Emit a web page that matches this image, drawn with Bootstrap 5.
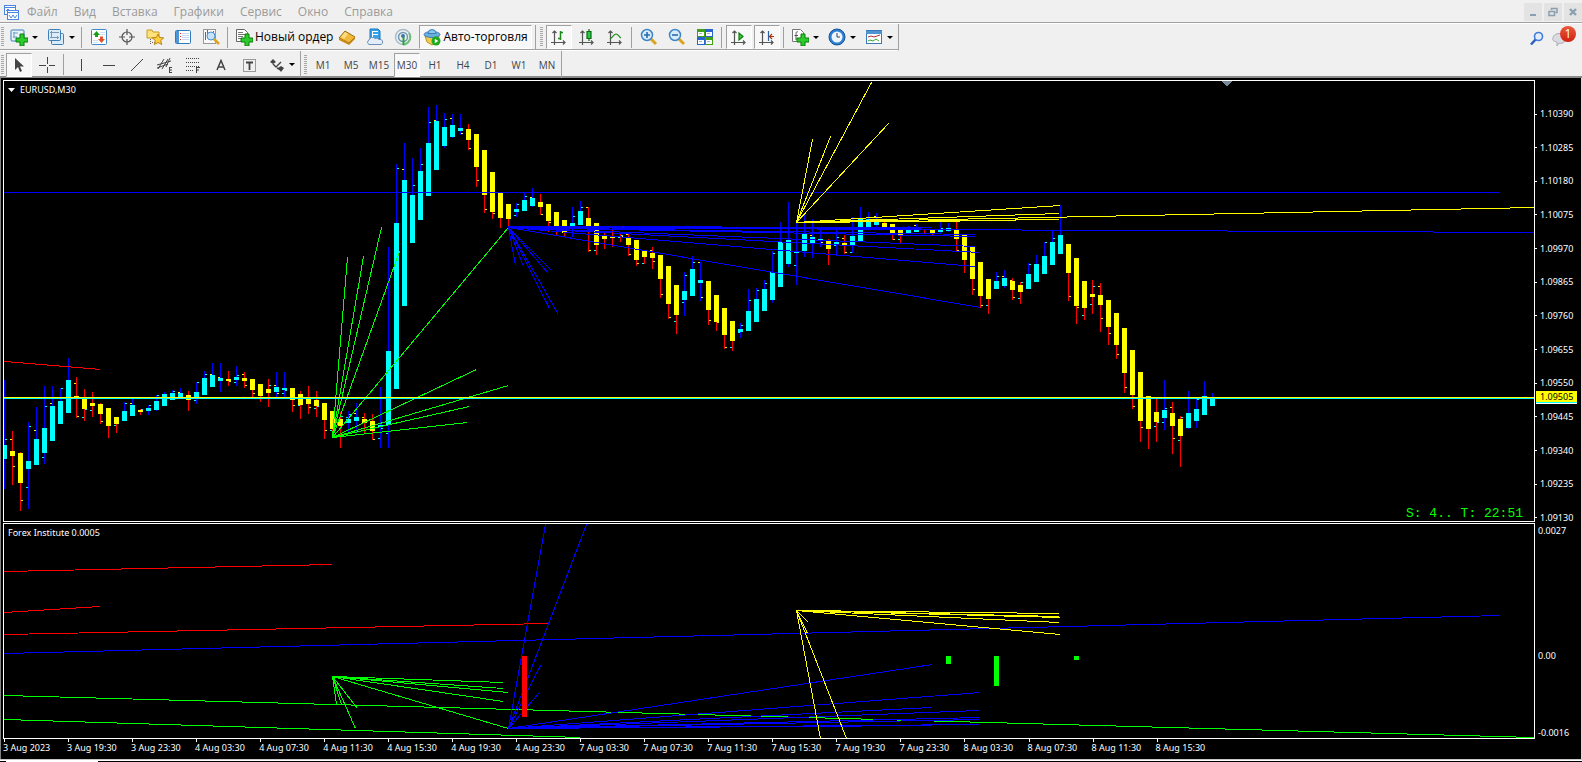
<!DOCTYPE html>
<html lang="ru">
<head>
<meta charset="utf-8">
<meta name="viewport" content="width=device-width, initial-scale=1">
<title>EURUSD,M30</title>
<link rel="stylesheet" href="https://cdn.jsdelivr.net/npm/bootstrap@5.3.0/dist/css/bootstrap.min.css">
<style>
body { background: #f0f0f0; font-family: "Open Sans", "Noto Sans", sans-serif; font-size: 12px; line-height: 16px; color: #000; }
button { border: 0; background: none; padding: 0; color: inherit; font: inherit; }
.menubar { height: 24px; border-bottom: 1px solid #fff; box-shadow: inset 0 -1px #a0a0a0; color: #9a9a9a; padding-top: 1px; }
.menubar nav { gap: 16px; padding-left: 8px; }
.win-btns { gap: 2px; }
.win-btn { width: 18px; height: 18px; background: #e3e3e3; display: grid; place-items: center; }
.tools-row { height: 27px; }
.strip { height: 27px; border-right: 1px solid #a0a0a0; border-bottom: 1px solid #fff; box-shadow: inset 0 -1px #a0a0a0; }
.strip-last { box-shadow: none; border-bottom: 0; }
.deck { border-bottom: 2px solid #8a8a8a; height: 27px; }
.grip { width: 3px; height: 20px; margin: 0 1px; background: repeating-linear-gradient(#a8a8a8 0 1px, #f0f0f0 1px 2px); }
.grip-frames { margin: 0 2px 0 3px; }
.tool { width: 28px; height: 24px; display: flex; align-items: center; justify-content: center; flex: none; }
.tool.drop { width: 37px; gap: 4px; }
.tool.drop::after { content: ""; border: 3px solid transparent; border-top-color: #000; border-bottom: 0; }
.tool.wide { width: auto; gap: 2px; padding: 0 0 0 4px; }
.tool.auto { margin: 0 3px 0 2px; padding: 0 3px; }
.pressed { background: #f8f8f8; border: 1px solid #fff; border-top-color: #a0a0a0; border-left-color: #a0a0a0; }
.tool.pressed:not(.wide) { width: 26px; margin: 0 1px; }
.divider { width: 1px; height: 21px; background: #a0a0a0; margin: 0 3px 0 2px; flex: none; }
.divider-end { height: 25px; margin: 0 1px 0 0; }
.frames { font-size: 10px; color: #444; }
.notice { position: relative; width: 26px; height: 20px; }
.notice b { position: absolute; left: 8px; top: -2px; width: 16px; height: 16px; border-radius: 50%; background: linear-gradient(#ea5a3c, #d02010); color: #fff; font-weight: 400; line-height: 16px; text-align: center; }
.desk { background: #000; color: #fff; font-family: "Noto Sans", sans-serif; font-size: 9px; line-height: 12px; border-left: 1px solid #808080; border-right: 1px solid #d8d8d8; padding: 2px 0 0 2px; }
.pane { border: 1px solid #fff; }
.pane svg { display: block; width: 100%; height: 100%; }
.pane-price { flex: 442 1 0; min-height: 0; }
.pane-ind { flex: 216 1 0; min-height: 0; margin-top: 1px; }
.price-col, .ind-col { width: 46px; flex: none; }
.plot { position: absolute; inset: 0; }
.cap { position: absolute; left: 4px; top: 3px; }
.cap .caret { display: inline-block; width: 7px; height: 4px; margin-right: 5px; vertical-align: 1px; }
.clock { position: absolute; right: 11px; bottom: -1px; font: 13px/16px "Liberation Mono", monospace; color: #0f0; white-space: pre; }
.price-col { padding: 28px 0 0; margin-bottom: -2px; }
.tick { display: flex; align-items: center; gap: 3px; }
.tick::before { content: ""; width: 2px; height: 1px; background: #fff; }
.quote { position: absolute; left: 1px; right: 4px; top: calc(100% * 311 / 444); background: #ff0; color: #000; padding-left: 4px; line-height: 11px; border-bottom: 1px solid #fff; box-shadow: inset 0 -1px #0ff; height: 13px; }
.ind-col { padding: 2px 0 0 3px; }
.dates { height: 20px; margin-right: 46px; padding-left: 1px; }
.dates span { flex: none; width: calc(100% * 64 / 1530); white-space: nowrap; position: relative; padding-top: 3px; text-indent: -1px; }
.dates span::before { content: ""; position: absolute; left: 0; top: 0; width: 1px; height: 3px; background: #fff; }
.tail { height: 3px; background: linear-gradient(#c8c8c8 0 1px, #fff 1px 2px, #000 2px); }
.tail i { height: 1px; width: 92px; margin-left: 6px; background: #fff; align-self: end; }
</style>
<script src="https://cdn.jsdelivr.net/npm/bootstrap@5.3.0/dist/js/bootstrap.bundle.min.js"></script>
</head>
<body class="vh-100 d-flex flex-column overflow-hidden">
<header>
  <div class="menubar d-flex align-items-center">
    <svg class="ms-1" width="15" height="15" viewBox="0 0 15 15" fill="#fff" stroke="#4a86e0"><rect x=".5" y=".5" width="11" height="9"/><path d="M1 2.500h10" /><path d="M2 6l2-2 2 2" fill="none"/><rect x="3.500" y="5.500" width="11" height="9"/><path d="M4 7.500h10M5 10l2 3 2-3 2 3 2-3" fill="none"/></svg>
    <nav class="d-flex flex-grow-1">
      <button>Файл</button><button>Вид</button><button>Вставка</button><button>Графики</button><button>Сервис</button><button>Окно</button><button>Справка</button>
    </nav>
    <div class="win-btns d-flex">
      <button class="win-btn" aria-label="Свернуть"><svg width="10" height="10"><path d="M2 7h6v2H2z" fill="#8c9fb1"/></svg></button>
      <button class="win-btn" aria-label="Восстановить"><svg width="10" height="10" fill="none" stroke="#8c9fb1" stroke-width="1.500"><path d="M3.500 3V1.500h5.500v4H7.500M1 4.500h5.500v4H1z"/></svg></button>
      <button class="win-btn" aria-label="Закрыть"><svg width="10" height="10" stroke="#8c9fb1" stroke-width="2.400"><path d="M2 2l6 6M8 2L2 8"/></svg></button>
    </div>
  </div>

  <div class="tools-row d-flex justify-content-between">
    <div class="strip d-flex align-items-center">
      <span class="grip"></span>
      <button class="tool drop" aria-label="Новый график"><svg width="18" height="18" viewBox="0 0 18 18"><rect x="1" y="2" width="13" height="11" rx="1" fill="#e8f2fb" stroke="#3d80b8"/><path d="M3 5h5M4 4v6M3 9h4" stroke="#6a9cc4"/><path d="M10 6h4v4h4v4h-4v4h-4v-4H6v-4h4z" fill="#2ccb2c" stroke="#0b7d0b"/></svg></button>
      <button class="tool drop" aria-label="Профили"><svg width="18" height="18" viewBox="0 0 18 18" fill="#dcebf8" stroke="#3d80b8"><rect x="4.500" y="5.500" width="12" height="11" rx="1"/><rect x="1.500" y="1.500" width="12" height="11" rx="1"/><path d="M3 4.500h9M4.500 3v7M3 9.500h9M10.500 8v3" stroke="#7a97b0"/></svg></button>
      <span class="divider"></span>
      <button class="tool" aria-label="Обзор рынка"><svg width="16" height="16" viewBox="0 0 16 16"><rect x=".5" y=".5" width="15" height="15" rx="1" fill="#fff" stroke="#3e87c8"/><path d="M9 3.500h5M9 5.500h5M2 11.500h5M2 13.500h5" stroke="#cfe0f2"/><path d="M2 6l3.500-4L9 6H7v2H4V6z" fill="#19a019"/><path d="M7 10l3.500 4 3.500-4h-2V7.500H9V10z" fill="#e2522c"/></svg></button>
      <button class="tool" aria-label="Окно данных"><svg width="16" height="16" viewBox="0 0 16 16" fill="none" stroke="#555" stroke-width="1.200"><circle cx="8" cy="8" r="5"/><path d="M8 0v6M8 10v6M0 8h6M10 8h6"/></svg></button>
      <button class="tool" aria-label="Навигатор"><svg width="18" height="18" viewBox="0 0 18 18"><path d="M1 2h5l1 2h6v6H1z" fill="#ffe27a" stroke="#c79a22"/><path d="M4.500 11v6M6 14.500h3" stroke="#666" stroke-dasharray="1 1"/><path d="M12 6l1.700 3.500 4 .4-3 2.600 1 4-3.700-2-3.500 2 .8-4-3-2.600 4-.4z" fill="#ffcf3d" stroke="#b98313"/></svg></button>
      <button class="tool" aria-label="Терминал"><svg width="16" height="16" viewBox="0 0 16 16"><rect x=".5" y="1.500" width="15" height="13" rx="1" fill="#fff" stroke="#2f79bd"/><path d="M1 2h3v12H1z" fill="#4d97d6"/><path d="M7 4.500h7M7 6.500h7M7 8.500h7M7 10.500h7" stroke="#c9d6f0"/><path d="M5 4.500h1M5 7.500h1M5 10.500h1" stroke="#d22"/></svg></button>
      <button class="tool" aria-label="Тестер"><svg width="18" height="18" viewBox="0 0 18 18"><rect x="1.500" y="1.500" width="12" height="14" fill="#fafafa" stroke="#999"/><path d="M3.500 4v8M5.500 2v4M11.500 3v3" stroke="#666"/><circle cx="9" cy="8" r="4" fill="#c7e3f9" stroke="#4a8fc9"/><path d="M12 11l5 5" stroke="#d9a520" stroke-width="2.500"/></svg></button>
      <span class="divider"></span>
      <button class="tool wide"><svg width="18" height="18" viewBox="0 0 18 18"><path d="M1.500 1.500h8l3 3v9h-11z" fill="#fff" stroke="#666"/><path d="M3 4.500h5M3 6.500h7M3 8.500h5M3 10.500h3" stroke="#777"/><path d="M10 6h4v4h4v4h-4v4h-4v-4H6v-4h4z" fill="#2ccb2c" stroke="#0b7d0b"/></svg>Новый ордер</button>
      <button class="tool" aria-label="MetaEditor"><svg width="18" height="18" viewBox="0 0 18 18"><path d="M1 10l6-7 10 6-6 6z" fill="#f0b93a" stroke="#a06c0c"/><path d="M1 10v2l10 5 6-6v-2l-6 6z" fill="#c98a1a"/><path d="M3 9l4-5 3 2-4 5z" fill="#fbdc83"/></svg></button>
      <button class="tool" aria-label="Хостинг"><svg width="18" height="18" viewBox="0 0 18 18"><path d="M4 1h8l2 2v8H4z" fill="#35a2ea" stroke="#1a78bf"/><path d="M6.500 3v7M7 3.500h5M7 6.500h5" stroke="#fff" fill="none"/><path d="M3 16.500a2.500 2.500 0 010-4.500 3.500 3.500 0 016-1.500 3 3 0 014 1 2.600 2.600 0 012 5z" fill="#e4edf7" stroke="#6b8fb8"/></svg></button>
      <button class="tool" aria-label="Сигналы"><svg width="18" height="18" viewBox="0 0 18 18" fill="none"><circle cx="9" cy="9" r="7.500" stroke="#a9bccb" stroke-width="1.500"/><circle cx="9" cy="9" r="4.500" stroke="#6f97b5" stroke-width="1.500"/><path d="M9 16.500A7.500 7.500 0 0015 5" stroke="#6fbf7a" stroke-width="2"/><circle cx="9" cy="8" r="2" fill="#3c78a8"/><path d="M9.500 9v8" stroke="#2fa03c" stroke-width="2"/></svg></button>
      <button class="tool wide pressed auto"><svg width="18" height="18" viewBox="0 0 18 18"><path d="M2 8l2 6 5 3 6-3 1-6z" fill="#f3cd4a" stroke="#b9912a"/><ellipse cx="9" cy="6.500" rx="8" ry="3" fill="#69aee0" stroke="#3f7fb5"/><path d="M5 5.500a4 4 0 018 0z" fill="#8bc6ef" stroke="#3f7fb5"/><circle cx="13" cy="13" r="4.500" fill="#1eaa1e"/><path d="M11.800 10.800v4.400l3.500-2.200z" fill="#fff"/></svg>Авто-торговля</button>
      <span class="divider divider-end"></span>
      <span class="grip grip-frames"></span>
      <button class="tool pressed" aria-label="Бары"><svg width="16" height="16" viewBox="0 0 16 16" fill="none" stroke="#555" stroke-width="1.200"><path d="M3.500 16V2M1.500 4l2-2 2 2M0 13.500h14M12 11.500l2 2-2 2"/><path d="M9.500 2v9M9.500 3.500H12M7 9.500h2.500" stroke="#1b8a1b" stroke-width="1.500"/></svg></button>
      <button class="tool" aria-label="Свечи"><svg width="16" height="16" viewBox="0 0 16 16" fill="none" stroke="#555" stroke-width="1.200"><path d="M3.500 16V2M1.500 4l2-2 2 2M0 13.500h14M12 11.500l2 2-2 2"/><path d="M10 0v12" stroke="#0b6b0b"/><path d="M8 2.500h4v7H8z" fill="#2cc84c" stroke="#0b6b0b"/></svg></button>
      <button class="tool" aria-label="Линия"><svg width="16" height="16" viewBox="0 0 16 16" fill="none" stroke="#555" stroke-width="1.200"><path d="M3.500 16V2M1.500 4l2-2 2 2M0 13.500h14M12 11.500l2 2-2 2"/><path d="M3 10c3-2 4-5 6-5s3 3 5 4" stroke="#1b8a1b"/></svg></button>
      <span class="divider"></span>
      <button class="tool" aria-label="Приблизить"><svg width="18" height="18" viewBox="0 0 18 18"><path d="M10 10l6 6" stroke="#d9a520" stroke-width="3"/><circle cx="7" cy="7" r="5.500" fill="#d8ecfb" stroke="#3f86c6" stroke-width="1.500"/><path d="M4 7h6M7 4v6" stroke="#2a6cab" stroke-width="1.600"/></svg></button>
      <button class="tool" aria-label="Отдалить"><svg width="18" height="18" viewBox="0 0 18 18"><path d="M10 10l6 6" stroke="#d9a520" stroke-width="3"/><circle cx="7" cy="7" r="5.500" fill="#d8ecfb" stroke="#3f86c6" stroke-width="1.500"/><path d="M4 7h6" stroke="#2a6cab" stroke-width="1.600"/></svg></button>
      <button class="tool" aria-label="Окна мозаикой"><svg width="16" height="16" viewBox="0 0 16 16"><path d="M0 0h8v8H0zM8 8h8v8H8z" fill="#3fa01c"/><path d="M8 0h8v8H8zM0 8h8v8H0z" fill="#2a62cf"/><path d="M1 3h6v4H1zM9 3h6v4H9zM1 11h6v4H1zM9 11h6v4H9z" fill="#fff"/><path d="M2 4.500h3M10 4.500h3M2 12.500h3M10 12.500h3" stroke="#9bb"/></svg></button>
      <span class="divider"></span>
      <button class="tool pressed" aria-label="Автопрокрутка"><svg width="16" height="16" viewBox="0 0 16 16" fill="none" stroke="#555" stroke-width="1.200"><path d="M3.500 16V2M1.500 4l2-2 2 2M0 13.500h14M12 11.500l2 2-2 2"/><path d="M8 4v7l4-3.500z" fill="#4c4" stroke="#0b7d0b"/></svg></button>
      <button class="tool pressed" aria-label="Сдвиг графика"><svg width="16" height="16" viewBox="0 0 16 16" fill="none" stroke="#555" stroke-width="1.200"><path d="M3.500 16V2M1.500 4l2-2 2 2M0 13.500h14M12 11.500l2 2-2 2"/><path d="M9.500 2v10" stroke="#2a62a0"/><path d="M15 7.500h-4M13 5l-2.500 2.500L13 10" stroke="#b03010"/></svg></button>
      <span class="divider"></span>
      <button class="tool drop" aria-label="Индикаторы"><svg width="18" height="18" viewBox="0 0 18 18"><path d="M1.500 1.500h8l3 3v9h-11z" fill="#fff" stroke="#777"/><path d="M7 4c-2-1-2 1-2 3v5M3.500 7.500H7" stroke="#555" fill="none"/><path d="M10 6h4v4h4v4h-4v4h-4v-4H6v-4h4z" fill="#2ccb2c" stroke="#0b7d0b"/></svg></button>
      <button class="tool drop" aria-label="Периоды"><svg width="18" height="18" viewBox="0 0 18 18"><circle cx="9" cy="9" r="8" fill="#2b7fd4" stroke="#17538f"/><circle cx="9" cy="9" r="5.500" fill="#eef6fd"/><path d="M9 5v4h3" stroke="#345" fill="none"/></svg></button>
      <button class="tool drop" aria-label="Шаблоны"><svg width="18" height="18" viewBox="0 0 18 18"><rect x="1.500" y="2.500" width="15" height="13" fill="#fff" stroke="#3a7ab5"/><path d="M1 3h16v3H1z" fill="#4f94d2"/><path d="M3 9l3-1 3 1 3-1 3-1" stroke="#a33" fill="none"/><path d="M3 13l2-1 3 1 3-2 3 2" stroke="#3a3" fill="none"/></svg></button>
    </div>
    <div class="d-flex align-items-center gap-2 pe-1">
      <button aria-label="Поиск"><svg width="15" height="15" viewBox="0 0 15 15" fill="none"><path d="M7 8l-5 5.500" stroke="#2c5fb8" stroke-width="2.500"/><circle cx="9.500" cy="5.500" r="4" fill="#e4eefb" stroke="#3f7ade" stroke-width="1.600"/></svg></button>
      <button class="notice" aria-label="Сообщения"><svg class="d-block" width="20" height="20" viewBox="0 -3 20 20"><path d="M1 7a6 4.500 0 0112 0c1 5-4 6-6 5l-2 3v-4C1 10 0 9 1 7z" fill="#dadce2" stroke="#a9adb8"/></svg><b>1</b></button>
    </div>
  </div>

  <div class="deck d-flex">
    <div class="strip strip-last d-flex align-items-center">
      <span class="grip"></span>
      <button class="tool pressed" aria-label="Курсор"><svg width="16" height="16" viewBox="0 0 16 16"><path d="M4 1v12l3-3 2 5 2-1-2-4.500h4z" fill="#444"/></svg></button>
      <button class="tool" aria-label="Перекрестие"><svg width="16" height="16" viewBox="0 0 16 16" stroke="#444" shape-rendering="crispEdges"><path d="M8.500 0v7M8.500 10v6M0 8.500h7M10 8.500h6"/></svg></button>
      <span class="divider"></span>
      <button class="tool" aria-label="Вертикальная линия"><svg width="16" height="16" stroke="#444" shape-rendering="crispEdges"><path d="M8.500 2v12"/></svg></button>
      <button class="tool" aria-label="Горизонтальная линия"><svg width="16" height="16" stroke="#444" shape-rendering="crispEdges"><path d="M2 8.500h12"/></svg></button>
      <button class="tool" aria-label="Трендовая линия"><svg width="16" height="16" stroke="#444"><path d="M2 14L14 2"/></svg></button>
      <button class="tool" aria-label="Канал"><svg width="18" height="18" viewBox="0 0 18 18" stroke="#444" fill="none"><path d="M2 13L8 3M6 13l6-10M10 11l4-9M1 9l14-4M1 12l11-4M13 11.500h3M13 14h3M13 16.500h3M13.500 11v6"/></svg></button>
      <button class="tool" aria-label="Фибоначчи"><svg width="18" height="18" viewBox="0 0 18 18" stroke="#444" fill="none"><path d="M2 2.500h13M2 6.500h13M2 10.500h13M2 14.500h8" stroke-dasharray="1 1"/><path d="M12.500 11v6M12 11.500h4M12 14h3"/></svg></button>
      <button class="tool" aria-label="Текст"><svg width="12" height="12" viewBox="0 0 12 12" fill="none" stroke="#444" stroke-width="1.500"><path d="M2 11L6 1.500 10 11M3.500 8h5"/></svg></button>
      <button class="tool" aria-label="Метка"><svg width="16" height="16" viewBox="0 0 16 16" stroke="#444" fill="none"><rect x="2.500" y="2.500" width="12" height="12" stroke-dasharray="1 1"/><path d="M5 5.500h7M8.500 5v8" stroke-width="1.800"/></svg></button>
      <button class="tool drop" aria-label="Стрелки"><svg width="16" height="16" viewBox="0 0 16 16" fill="#444"><path d="M1 5l3-3 3 3-3 2zM9 11l3-2 3 2-3 4z"/><path d="M4 7l3 3 5-5M8 11l4 2" stroke="#444" stroke-width="1.400" fill="none"/></svg></button>
    </div>
    <div class="strip strip-last d-flex align-items-center frames">
      <span class="grip grip-frames"></span>
      <button class="tool">M1</button><button class="tool">M5</button><button class="tool">M15</button><button class="tool pressed">M30</button><button class="tool">H1</button><button class="tool">H4</button><button class="tool">D1</button><button class="tool">W1</button><button class="tool">MN</button>
    </div>
  </div>
</header>

<main class="desk flex-grow-1 d-flex flex-column">
  <section class="pane-price d-flex">
    <div class="pane flex-grow-1 position-relative">
      <div class="plot"><svg id="price" viewBox="4 81 1530 440" preserveAspectRatio="none" shape-rendering="crispEdges" role="img" aria-label="EURUSD M30"></svg></div>
      <div class="cap"><svg class="caret" viewBox="0 0 7 4"><path d="M0 0h7L3.500 4z" fill="#fff"/></svg>EURUSD,M30</div>
      <div class="clock">S: 4.. T: 22:51</div>
    </div>
    <div class="price-col d-flex flex-column justify-content-between position-relative" id="prices">
      <div class="quote">1.09505</div>
    </div>
  </section>
  <section class="pane-ind d-flex">
    <div class="pane flex-grow-1 position-relative">
      <div class="plot"><svg id="ind" viewBox="4 524 1530 214" preserveAspectRatio="none" shape-rendering="crispEdges" role="img" aria-label="Forex Institute"></svg></div>
      <div class="cap">Forex Institute 0.0005</div>
    </div>
    <div class="ind-col d-flex flex-column justify-content-between"><span>0.0027</span><span class="mt-5">0.00</span><span>-0.0016</span></div>
  </section>
  <div class="dates d-flex" id="dates"></div>
</main>
<div class="tail d-flex"><i></i></div>

<script>
// One row per bar: high, low, body top, body bottom, direction,
// then marks: side (l = open, r = close), y, colour (c / y)
const bars = `380 489 445 459 c r439c
431 485 451 456 y l439y r466y
452 511 453 483 y r500y
422 509 461 469 c r426c l487c
407 465 439 465 c l430y
386 464 428 453 c r406c l457c
386 441 406 441 c l403y
388 424 401 424 c r388c
358 413 380 413 c
377 418 396 398 y l383y r416y
389 421 398 409 y r409c l417c
392 417 403 406 y l410c
403 424 404 414 y r421y
408 438 408 426 y
417 433 417 424 y l425c
402 421 411 421 c r403c
399 416 405 416 c l403y
409 415 410 412 y r409c
405 415 408 411 c r405c
395 411 401 410 c r395c
392 406 394 406 c
390 400 393 400 c r391c
388 398 393 398 c l392y
391 411 395 400 y
382 404 392 398 c r382c l400c
371 395 378 395 c r374c
363 387 375 387 c l374y
363 392 378 381 c l377y
371 386 379 381 y r381y
366 386 377 380 c r375c l382c
372 388 378 381 y l374y r385y
379 397 379 390 y r393y
384 402 384 396 y
379 407 389 393 y r385c
372 397 387 392 c l385y r393y
372 398 388 390 c r390c l393c
388 412 388 400 y r405y
391 419 394 405 y l405c
386 414 398 404 y r407y
391 417 400 406 y r406c l408c
403 439 403 420 y r430y
411 432 411 429 y l430c
412 448 419 426 y r416c
411 432 419 423 c r414c l417c
403 432 417 421 c l413y
413 434 419 423 y l417y
414 440 421 431 y r439y
387 448 425 427 c r428c l438c
247 448 351 425 c l433c
164 389 223 389 c r168c
143 306 180 306 c l169y
158 243 195 243 c r185c
148 220 171 220 c r164c
107 196 143 196 c r122c
105 170 121 170 c l120y
113 148 127 146 c r119c
114 138 125 137 c l118y
114 135 128 131 c r133y
124 150 129 140 y r148y
134 187 134 167 y r180y
150 213 150 195 y r209y
172 219 172 212 y r213y
193 228 193 218 y
204 227 204 219 y
203 217 209 212 c r204c l215c
193 211 200 211 c r196c
188 207 198 206 c l197y
194 215 202 207 y r214y
204 232 204 221 y r222y
212 236 212 229 y r231y
220 236 220 233 y
207 237 223 226 c r216c
201 225 211 225 c r207c
207 252 218 229 y l207y r250y
223 255 223 245 y l250c
231 249 235 239 y
229 247 236 238 y
233 242 236 237 y r235c l237c
234 256 237 245 y l234y r254y
240 266 240 260 y r263y
250 264 250 257 y l263c
247 269 253 258 y r261y l250y
255 298 255 279 y r294y
266 319 266 304 y r317y
285 334 285 315 y l321c
272 316 291 300 c r275c l302c
256 296 269 296 c r262c
262 301 280 283 c l262y r297y
281 325 281 310 y r320y
295 331 295 322 y r322y
308 349 308 335 y r347y
321 351 321 341 y l347c
323 338 329 332 c r325c l332c
289 331 311 331 c r300c
288 322 299 322 c r290c
280 311 289 311 c r283c
251 303 272 300 c r253c
222 287 242 287 c
202 267 240 264 c
222 285 251 253 c l265c
214 257 234 251 c l233y
219 258 237 243 c l235y
230 247 239 241 c r242y
239 265 241 249 y
230 256 242 244 c r237c l245c
235 254 243 245 y l238y r252y
217 253 236 245 c l252c
207 241 219 241 c
212 228 219 227 c
213 228 222 225 c l216y
222 230 223 227 y
224 240 224 233 y r239y
229 243 229 236 y l239c
226 233 229 233 c
224 232 229 232 c l225y
229 234 229 230 y r233y
229 235 230 234 y
222 234 230 232 c l233c r228c
223 232 228 231 c
221 251 230 239 y r250y
234 273 234 260 y
247 295 247 279 y r289y
262 308 262 296 y r305y
279 314 279 299 y l305c
272 289 281 289 c r276c
270 288 278 286 c l276y
278 300 281 290 y r297y l280y
282 304 285 292 y r282c l298c
263 289 274 289 c r264c
255 282 264 282 c
242 274 256 274 c r242c
230 265 242 265 c r238c
205 254 235 254 c
244 301 244 273 y r296y
258 324 258 306 y r307y
281 320 281 308 y l315c
280 314 294 297 y r286c l304c
283 332 295 305 y l286y r318y
300 345 300 327 y r333y
313 359 313 345 y r354y
328 393 328 373 y r387y
350 409 350 395 y r406y
372 442 372 421 y r427y
396 449 396 429 y
399 442 412 422 y r422c l426c
380 430 410 418 c r408c l422c
402 454 413 426 y l407y r438y
416 467 419 436 y r417c l440c
391 429 413 428 c
399 428 409 421 c r399c
381 415 396 415 c
393 406 398 406 c`.split('\n');
const hue = { c: '#0ff', y: '#ff0', r: '#f00', b: '#00f', g: '#0f0' };
const rect = (x, y, w, h, c) => `<rect x="${x}" y="${y}" width="${w}" height="${h}" fill="${hue[c]}"/>`;
const line = (x1, y1, x2, y2, c) => `<line x1="${x1 + .5}" y1="${y1 + .5}" x2="${x2 + .5}" y2="${y2 + .5}" stroke="${hue[c]}"/>`;
const fan = (x, y, c, ends) => ends.map(e => line(x, y, e[0], e[1], c)).join('');

let s = '';
bars.forEach((row, i) => {
  const [hi, lo, top, bot, dir, ...marks] = row.split(' ');
  const x = 4 + 8 * i;
  s += rect(x, +hi, 1, lo - hi, dir === 'c' ? 'b' : 'r') + rect(x - 2, +top, 5, bot - top, dir);
  marks.forEach(m => { s += rect(m[0] === 'l' ? x - 2 : x + 1, parseInt(m.slice(1)), 2, 1, m.slice(-1)); });
});
s += line(4, 361, 100, 369, 'r') + rect(4, 192, 1496, 1, 'b');
s += fan(332, 437, 'g', [[347,257],[363,256],[381,227],[399,251],[508,227],[476,369],[508,385],[469,406],[467,422]]);
s += fan(508, 227, 'b', [[515,265],[523,266],[551,270],[548,273],[549,308],[558,314],[931,227],[950,229],[1534,232],[975,234],[975,236],[975,246],[980,252],[975,266],[980,307]]);
s += rect(508, 226, 213, 1, 'b') + rect(721, 228, 200, 1, 'b');
s += fan(796, 222, 'y', [[812,139],[830,136],[871,82],[888,123],[1060,205],[1059,213],[1059,219],[1016,220],[1534,207]]);
s += rect(4, 397, 1530, 1, 'y') + rect(4, 398, 1530, 1, 'c');
s += '<path d="M1221 81h11l-5 5h-1z" fill="#778899"/>';
document.getElementById('price').innerHTML = s;

let t = line(4,571,332,564,'r') + line(4,612,100,606,'r') + line(4,634,548,623,'r');
t += line(4,695,1534,737,'g') + line(4,719,580,737,'g') + line(4,653,1500,615,'b');
t += fan(332, 676, 'g', [[503,682],[503,688],[508,692],[503,701],[508,728],[336,704],[341,704],[357,708],[355,728]]);
t += fan(508, 728, 'b', [[545,524],[586,524],[540,665],[539,692],[932,664],[980,692],[932,707],[979,710],[980,717],[979,719],[979,724],[932,725]]);
t += fan(796, 610, 'y', [[1059,613],[1059,616],[1060,617],[1059,622],[1060,634],[808,622],[807,633],[820,738],[846,738]]);
t += rect(522,656,5,61,'r') + rect(946,656,5,8,'g') + rect(994,656,5,30,'g') + rect(1074,656,5,4,'g');
document.getElementById('ind').innerHTML = t;

document.getElementById('prices').insertAdjacentHTML('beforeend',
  ['1.10390','1.10285','1.10180','1.10075','1.09970','1.09865','1.09760','1.09655','1.09550','1.09445','1.09340','1.09235','1.09130']
  .map(p => `<span class="tick">${p}</span>`).join(''));
document.getElementById('dates').innerHTML =
  ['3 Aug 2023','3 Aug 19:30','3 Aug 23:30','4 Aug 03:30','4 Aug 07:30','4 Aug 11:30','4 Aug 15:30','4 Aug 19:30','4 Aug 23:30','7 Aug 03:30','7 Aug 07:30','7 Aug 11:30','7 Aug 15:30','7 Aug 19:30','7 Aug 23:30','8 Aug 03:30','8 Aug 07:30','8 Aug 11:30','8 Aug 15:30']
  .map(d => `<span>${d}</span>`).join('');
</script>
</body>
</html>
